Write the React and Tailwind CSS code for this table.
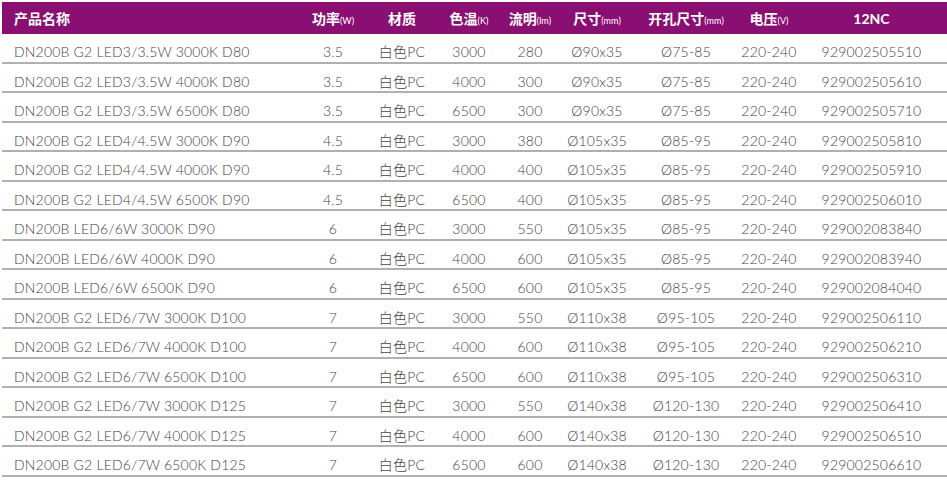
import React from 'react';

const rows = [
  ['DN200B G2 LED3/3.5W 3000K D80', '3.5', '3000', '280', 'Ø90x35', 'Ø75-85', '929002505510'],
  ['DN200B G2 LED3/3.5W 4000K D80', '3.5', '4000', '300', 'Ø90x35', 'Ø75-85', '929002505610'],
  ['DN200B G2 LED3/3.5W 6500K D80', '3.5', '6500', '300', 'Ø90x35', 'Ø75-85', '929002505710'],
  ['DN200B G2 LED4/4.5W 3000K D90', '4.5', '3000', '380', 'Ø105x35', 'Ø85-95', '929002505810'],
  ['DN200B G2 LED4/4.5W 4000K D90', '4.5', '4000', '400', 'Ø105x35', 'Ø85-95', '929002505910'],
  ['DN200B G2 LED4/4.5W 6500K D90', '4.5', '6500', '400', 'Ø105x35', 'Ø85-95', '929002506010'],
  ['DN200B LED6/6W 3000K D90', '6', '3000', '550', 'Ø105x35', 'Ø85-95', '929002083840'],
  ['DN200B LED6/6W 4000K D90', '6', '4000', '600', 'Ø105x35', 'Ø85-95', '929002083940'],
  ['DN200B LED6/6W 6500K D90', '6', '6500', '600', 'Ø105x35', 'Ø85-95', '929002084040'],
  ['DN200B G2 LED6/7W 3000K D100', '7', '3000', '550', 'Ø110x38', 'Ø95-105', '929002506110'],
  ['DN200B G2 LED6/7W 4000K D100', '7', '4000', '600', 'Ø110x38', 'Ø95-105', '929002506210'],
  ['DN200B G2 LED6/7W 6500K D100', '7', '6500', '600', 'Ø110x38', 'Ø95-105', '929002506310'],
  ['DN200B G2 LED6/7W 3000K D125', '7', '3000', '550', 'Ø140x38', 'Ø120-130', '929002506410'],
  ['DN200B G2 LED6/7W 4000K D125', '7', '4000', '600', 'Ø140x38', 'Ø120-130', '929002506510'],
  ['DN200B G2 LED6/7W 6500K D125', '7', '6500', '600', 'Ø140x38', 'Ø120-130', '929002506610'],
];

// column widths measured off the picture
const cols = 'grid grid-cols-[298px_66px_72px_62px_60px_74px_104px_62px_143px]';

const headers = [
  ['功率', '(W)'],
  ['材质', ''],
  ['色温', '(K)'],
  ['流明', '(lm)'],
  ['尺寸', '(mm)'],
  ['开孔尺寸', '(mm)'],
  ['电压', '(V)'],
  ['12NC', ''],
];

export default function App() {
  return (
    <div
      className="w-[947px] h-[480px] bg-white pt-[2px] pl-[2px] overflow-hidden"
      style={{ fontFamily: '"Lato", "Noto Sans CJK SC", sans-serif' }}
    >
      <div className={`${cols} h-[32px] bg-[#8a0f72] text-white items-center`}>
        <div className="pl-[12px] text-[14px] font-bold">产品名称</div>
        {headers.map(([t, u], i) => (
          <div key={i} className="text-center text-[14px] font-bold whitespace-nowrap">
            {t}
            {u && <span className="text-[9px] font-normal">{u}</span>}
          </div>
        ))}
      </div>

      {rows.map((r, i) => (
        <div
          key={i}
          className={`${cols} h-[29.5px] pt-[7px] items-center border-b-2 border-[#b0b0b0] text-[14px] font-light text-[#444] tracking-[0.2px]`}
        >
          <div className="pl-[12px] whitespace-nowrap">{r[0]}</div>
          <div className="text-center">{r[1]}</div>
          <div className="text-center">白色PC</div>
          <div className="text-center">{r[2]}</div>
          <div className="text-center">{r[3]}</div>
          <div className="text-center">{r[4]}</div>
          <div className="text-center">{r[5]}</div>
          <div className="text-center">220-240</div>
          <div className="text-center">{r[6]}</div>
        </div>
      ))}
    </div>
  );
}
